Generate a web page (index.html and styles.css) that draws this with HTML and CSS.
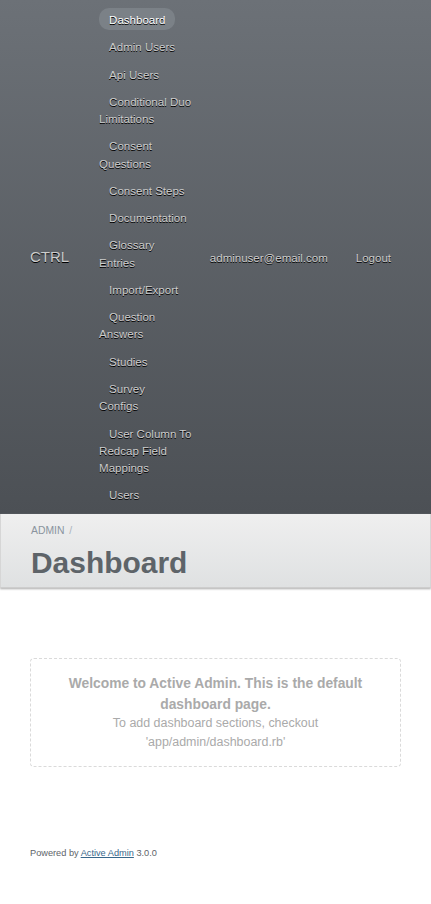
FILE: index.html
```html
<!DOCTYPE html>
<html lang="en">
<head>
<meta charset="utf-8">
<title>Dashboard | CTRL</title>
<link rel="stylesheet" href="styles.css">
</head>
<body>
<div class="header">
  <h1 class="site-title">CTRL</h1>
  <ul class="tabs">
    <li class="current"><a href="#">Dashboard</a></li>
    <li><a href="#">Admin Users</a></li>
    <li><a href="#">Api Users</a></li>
    <li><a href="#">Conditional Duo Limitations</a></li>
    <li><a href="#">Consent Questions</a></li>
    <li><a href="#">Consent Steps</a></li>
    <li><a href="#">Documentation</a></li>
    <li><a href="#">Glossary Entries</a></li>
    <li><a href="#">Import/Export</a></li>
    <li><a href="#">Question Answers</a></li>
    <li><a href="#">Studies</a></li>
    <li><a href="#">Survey Configs</a></li>
    <li><a href="#">User Column To Redcap Field Mappings</a></li>
    <li><a href="#">Users</a></li>
  </ul>
  <ul class="utility-nav">
    <li><a href="#">adminuser@email.com</a></li>
    <li><a href="#">Logout</a></li>
  </ul>
</div>
<div class="title-bar">
  <div class="breadcrumb"><a href="#">Admin</a> <span class="sep">/</span></div>
  <h2 class="page-title">Dashboard</h2>
</div>
<div class="content">
  <div class="blank-slate-container">
    <span class="blank-slate">
      <span>Welcome to Active Admin. This is the default dashboard page.</span>
      <small>To add dashboard sections, checkout 'app/admin/dashboard.rb'</small>
    </span>
  </div>
</div>
<div class="footer">
  <p>Powered by <a href="#">Active Admin</a> 3.0.0</p>
</div>
</body>
</html>
```

FILE: styles.css
```css
html, body {
  margin: 0;
  padding: 0;
}
body {
  font-family: "Liberation Sans", Arial, sans-serif;
  font-size: 11.52px;
  line-height: 1.5;
  color: #323537;
  background: #fff;
}
.header {
  display: flex;
  align-items: center;
  padding: 5px 30px;
  background: linear-gradient(180deg, #6c7177 0%, #4c5055 100%);
  text-shadow: #000 0 1px 0;
}
.site-title {
  margin: 0;
  padding-right: 30px;
  font-size: 1.3em;
  font-weight: normal;
  line-height: 1.2;
  color: #cdcdcd;
  white-space: nowrap;
}
.tabs {
  list-style: none;
  margin: 0;
  padding: 7px 0 4px;
  width: 97px;
  flex: none;
  display: flex;
  flex-direction: column;
  gap: 10px;
}
.tabs a {
  color: #cdcdcd;
  text-decoration: none;
  padding: 6px 10px 4px;
}
.tabs .current a {
  color: #fff;
  background: #7b8187;
  border-radius: 10px;
}
.utility-nav {
  list-style: none;
  margin: 0;
  padding: 2px 0 0;
  flex: 1;
  display: flex;
  justify-content: flex-end;
  gap: 8px;
}
.utility-nav a {
  display: block;
  color: #cdcdcd;
  text-decoration: none;
  padding: 6px 10px 4px;
  white-space: nowrap;
}
.title-bar {
  padding: 12px 30px 9px;
  background: linear-gradient(180deg, #efefef 0%, #dfe1e2 100%);
  border-left: 1px solid #d6d6d6;
  border-right: 1px solid #d6d6d6;
  border-bottom: 1px solid #cdcdcd;
  box-shadow: 0 1px 2px #aaa;
}
.breadcrumb {
  font-size: 0.9em;
  line-height: 1em;
  margin-bottom: 12px;
  text-transform: uppercase;
  color: #8a949e;
}
.breadcrumb a {
  color: #8a949e;
  text-decoration: none;
}
.breadcrumb .sep {
  margin: 0 2px;
  color: #aab2ba;
}
.page-title {
  margin: 0;
  font-size: 2.6em;
  line-height: 1em;
  font-weight: bold;
  color: #5e6469;
}
.content {
  padding: 70px 30px 0;
}
.blank-slate-container {
  text-align: center;
}
.blank-slate {
  display: inline-block;
  border: 1px dashed #dadada;
  border-radius: 4px;
  padding: 14px 25px;
  font-size: 1.2em;
  font-weight: bold;
  color: #aaa;
}
.blank-slate small {
  display: block;
  font-size: 0.9em;
  font-weight: normal;
}
.footer {
  padding: 80px 30px 30px;
  font-size: 0.8em;
  color: #5e6469;
}
.footer p {
  margin: 0;
}
.footer a {
  color: #38678b;
  text-decoration: underline;
}
```
